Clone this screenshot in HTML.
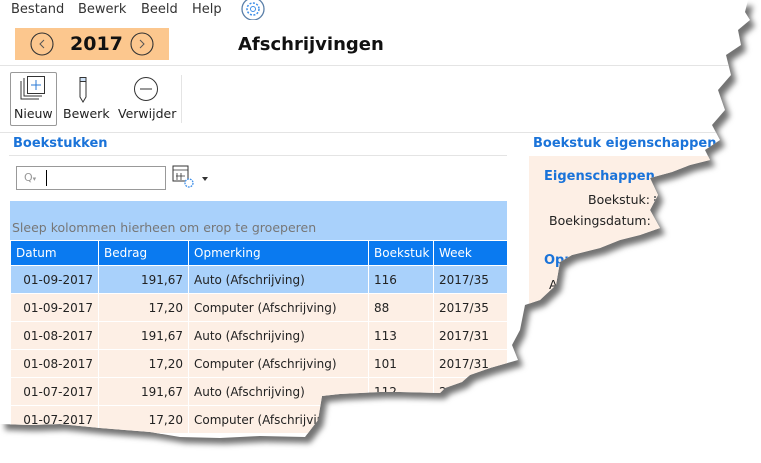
<!DOCTYPE html>
<html><head><meta charset="utf-8"><style>
*{margin:0;padding:0;box-sizing:border-box}
body{width:761px;height:463px;background:#fff;overflow:hidden;font-family:"DejaVu Sans","Liberation Sans",sans-serif;font-size:12px;color:#222;position:relative}
#wrap{position:absolute;left:0;top:0;width:761px;height:463px;filter:drop-shadow(5px 6px 3px rgba(0,0,0,.55))}
#page{position:absolute;left:0;top:0;width:761px;height:463px;background:#fff;
clip-path:polygon(0 0,748px 0,745px 12px,750px 20px,738px 30px,741px 45px,726px 55px,731px 75px,718px 90px,725px 110px,712px 125px,720px 140px,705px 150px,710px 160px,690px 165px,672px 172px,650px 178px,658px 195px,650px 210px,660px 228px,640px 235px,620px 240px,600px 248px,572px 255px,560px 262px,556px 285px,540px 300px,525px 305px,520px 330px,512px 345px,518px 360px,490px 368px,470px 375px,462px 382px,445px 388px,440px 393px,400px 392px,380px 392px,340px 394px,322px 396px,318px 420px,305px 437px,260px 436px,220px 438px,180px 437px,150px 432px,100px 428px,60px 424px,30px 425px,0 424px)}
.a{position:absolute;white-space:nowrap}
.menu span{position:absolute;top:2px;font-size:13px;color:#333}
.blue{color:#1a73d9;font-weight:bold;font-size:13px}
table{border-collapse:collapse;table-layout:fixed;position:absolute;left:10px;top:240px;width:497px;font-size:12px}
td,th{height:28px;border:1px solid #fff;padding:0 5px;font-weight:normal;text-align:left;overflow:hidden;white-space:nowrap}
th{height:25px;background:#0a7af0;color:#fff}
td.r{text-align:right}
tr.s td{background:#a9d1fb}
tr.n td{background:#fdefe5}
</style></head><body>
<div id="wrap"><div id="page">
<div class="menu"><span style="left:11px">Bestand</span><span style="left:78px">Bewerk</span><span style="left:141px">Beeld</span><span style="left:192px">Help</span></div>
<svg class="a" style="left:240px;top:0" width="26" height="20"><circle cx="13" cy="9" r="11" fill="none" stroke="#5a7fa8" stroke-width="1.3"/><circle cx="13" cy="9" r="6" fill="none" stroke="#3d8ee8" stroke-width="1.5" stroke-dasharray="2 1.5"/><circle cx="13" cy="9" r="2.5" fill="none" stroke="#3d8ee8"/></svg>
<div class="a" style="left:15px;top:28px;width:154px;height:32px;background:#fcc78e"></div>
<svg class="a" style="left:30px;top:32px" width="130" height="26"><circle cx="12" cy="12" r="11" fill="none" stroke="#333" stroke-width="1.1"/><path d="M14 8l-4 4 4 4" fill="none" stroke="#555"/><circle cx="112" cy="12" r="11" fill="none" stroke="#333" stroke-width="1.1"/><path d="M110 8l4 4-4 4" fill="none" stroke="#555"/></svg>
<div class="a" style="left:70px;top:33px;font-size:19px;font-weight:bold;color:#111">2017</div>
<div class="a" style="left:238px;top:34px;font-size:18px;font-weight:bold;color:#111">Afschrijvingen</div>
<div class="a" style="left:0;top:65px;width:761px;height:1px;background:#e4e4e4"></div>
<div class="a" style="left:10px;top:72px;width:47px;height:54px;border:1px solid #999;border-radius:2px"></div>
<svg class="a" style="left:20px;top:76px" width="26" height="26"><path d="M1 5v18h18" fill="none" stroke="#333"/><path d="M4 2v18h18" fill="none" stroke="#333"/><rect x="7.5" y="0.5" width="17" height="17" fill="#fff" stroke="#333"/><path d="M16 4v10M11 9h10" stroke="#2a7ad6"/></svg>
<div class="a" style="left:14px;top:106px;font-size:12.5px">Nieuw</div>
<svg class="a" style="left:78px;top:77px" width="10" height="26"><rect x="2" y="0.5" width="6" height="4" fill="#cfe3f8" stroke="#333"/><path d="M2 5v15l3 5 3-5V5" fill="none" stroke="#333"/></svg>
<div class="a" style="left:63px;top:106px;font-size:12.5px">Bewerk</div>
<svg class="a" style="left:133px;top:76px" width="26" height="26"><circle cx="13" cy="13" r="11.5" fill="none" stroke="#333"/><path d="M7 13h12" stroke="#333"/></svg>
<div class="a" style="left:118px;top:106px;font-size:12.5px">Verwijder</div>
<div class="a" style="left:181px;top:75px;width:1px;height:48px;background:#e4e4e4"></div>
<div class="a" style="left:0;top:132px;width:761px;height:1px;background:#e4e4e4"></div>
<div class="a blue" style="left:13px;top:136px">Boekstukken</div>
<div class="a" style="left:9px;top:155px;width:498px;height:1px;background:#e4e4e4"></div>
<div class="a" style="left:16px;top:166px;width:150px;height:24px;border:1px solid #999"></div>
<div class="a" style="left:24px;top:171px;font-size:11px;color:#999">Q<span style="font-size:7px">▾</span></div>
<div class="a" style="left:46px;top:170px;width:1px;height:16px;background:#000"></div>
<svg class="a" style="left:172px;top:165px" width="40" height="26"><rect x="1" y="1" width="15" height="15" fill="#fff" stroke="#333"/><path d="M1 5h15M5 8v7M9 8v7M4 11h9" stroke="#333" stroke-width=".8"/><circle cx="17" cy="18" r="4" fill="#fff" stroke="#3d8ee8" stroke-width="1.3" stroke-dasharray="1.8 1"/><path d="M30 12h6l-3 4z" fill="#333"/></svg>
<div class="a" style="left:10px;top:201px;width:497px;height:39px;background:#a9d1fb"></div>
<div class="a" style="left:12px;top:220px;color:#777;font-size:12.5px">Sleep kolommen hierheen om erop te groeperen</div>
<table>
<colgroup><col style="width:88px"><col style="width:90px"><col style="width:180px"><col style="width:65px"><col style="width:74px"></colgroup>
<tr><th>Datum</th><th>Bedrag</th><th>Opmerking</th><th>Boekstuk</th><th>Week</th></tr>
<tr class="s"><td class="r">01-09-2017</td><td class="r">191,67</td><td>Auto (Afschrijving)</td><td>116</td><td>2017/35</td></tr>
<tr class="n"><td class="r">01-09-2017</td><td class="r">17,20</td><td>Computer (Afschrijving)</td><td>88</td><td>2017/35</td></tr>
<tr class="n"><td class="r">01-08-2017</td><td class="r">191,67</td><td>Auto (Afschrijving)</td><td>113</td><td>2017/31</td></tr>
<tr class="n"><td class="r">01-08-2017</td><td class="r">17,20</td><td>Computer (Afschrijving)</td><td>101</td><td>2017/31</td></tr>
<tr class="n"><td class="r">01-07-2017</td><td class="r">191,67</td><td>Auto (Afschrijving)</td><td>112</td><td>2017/26</td></tr>
<tr class="n"><td class="r">01-07-2017</td><td class="r">17,20</td><td>Computer (Afschrijving)</td><td>95</td><td>2017/26</td></tr>
</table>
<div class="a blue" style="left:533px;top:136px">Boekstuk eigenschappen</div>
<div class="a" style="left:529px;top:156px;width:232px;height:307px;background:#fdefe5"></div>
<div class="a blue" style="left:544px;top:169px">Eigenschappen</div>
<div class="a" style="left:588px;top:192px;font-size:12.5px">Boekstuk:</div>
<div class="a" style="left:549px;top:213px;font-size:12.5px">Boekingsdatum:</div>
<div class="a" style="left:654px;top:196px;width:2px;height:20px;border-left:2px dotted #777"></div>
<div class="a blue" style="left:544px;top:253px">Opmerking</div>
<div class="a" style="left:549px;top:277px;font-size:12.5px">Auto</div>
</div></div>
</body></html>
